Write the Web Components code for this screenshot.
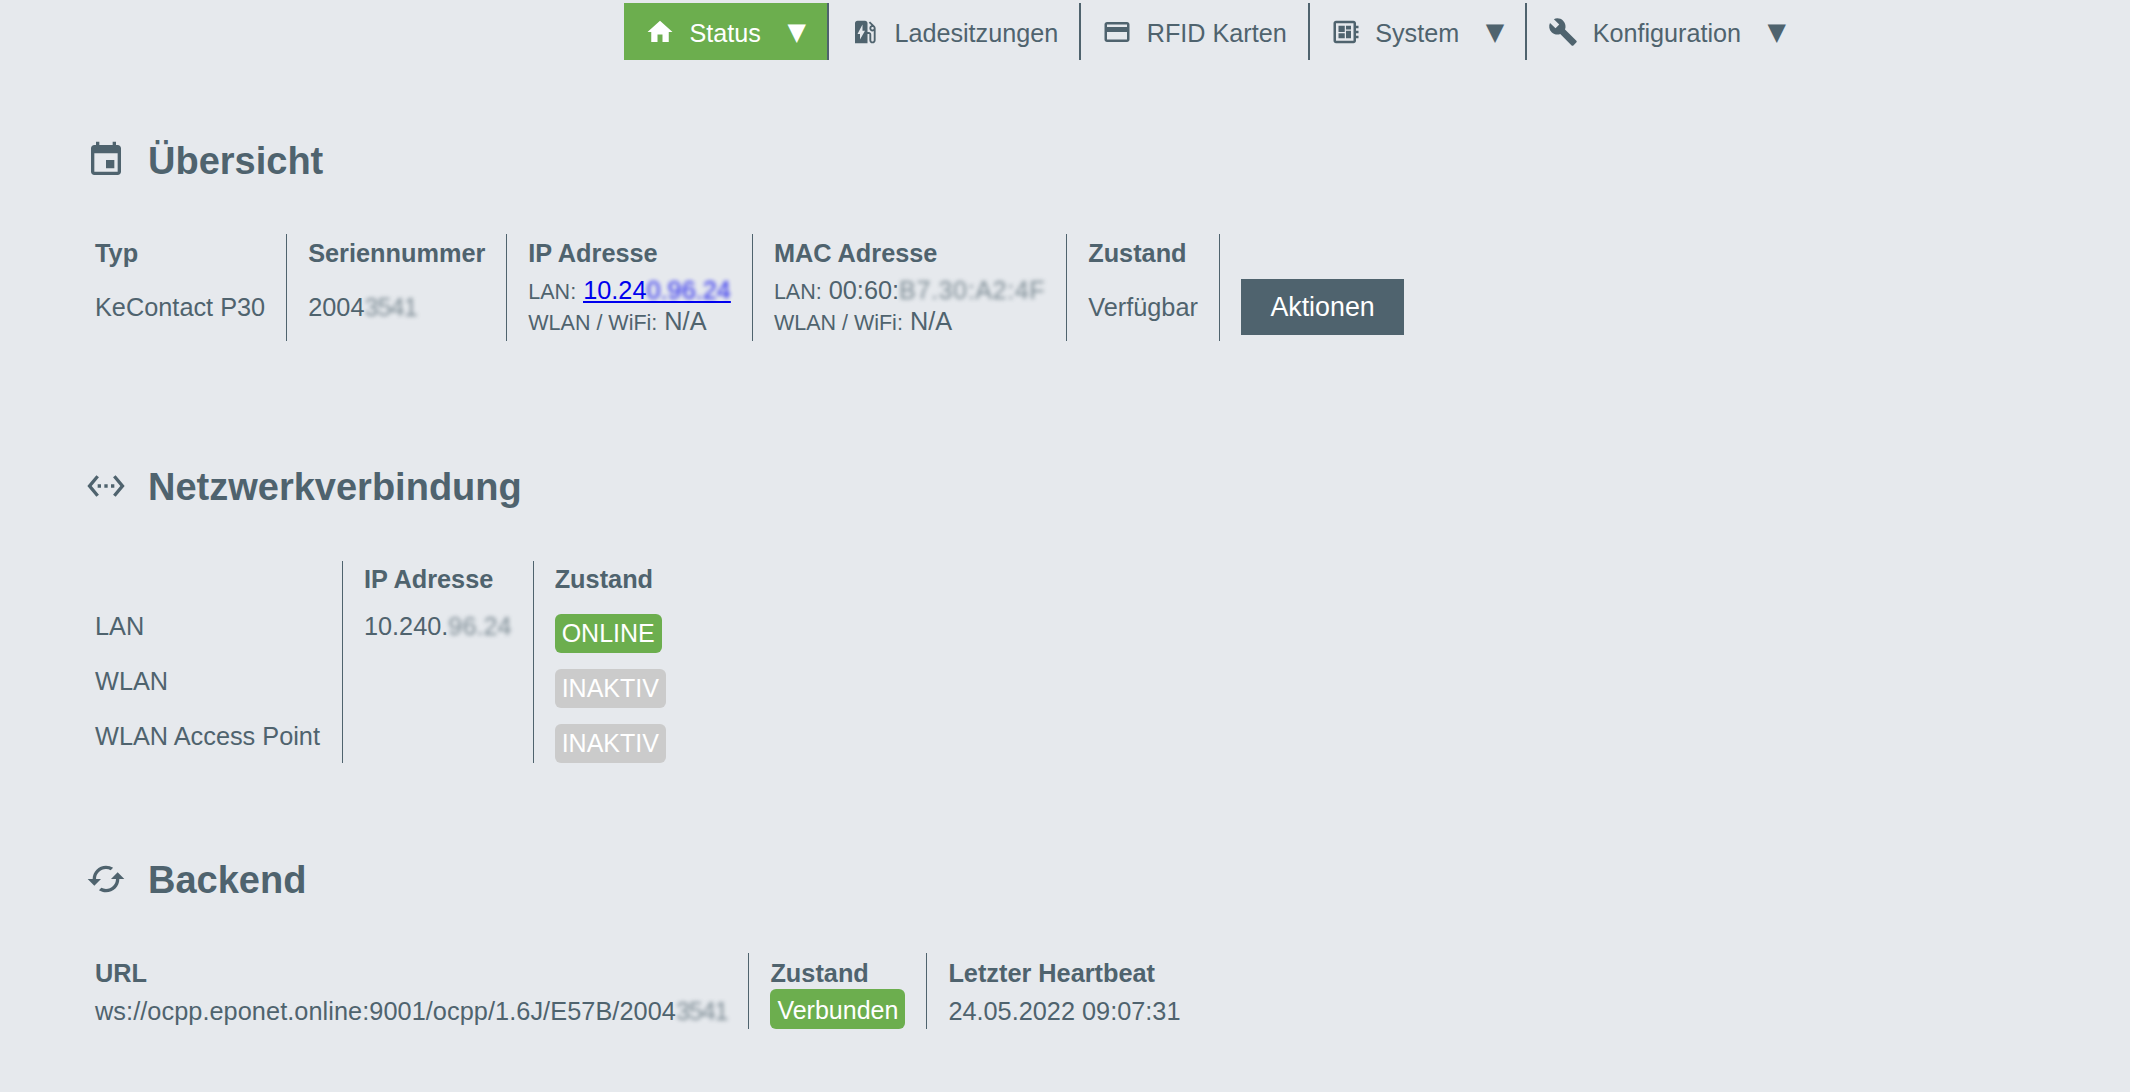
<!DOCTYPE html>
<html lang="de"><head><meta charset="utf-8"><title>Status</title>
<style>
html,body{margin:0;padding:0;background:#e6e9ed;color:#4f636e;font-family:"Liberation Sans",Arial,sans-serif;font-size:25.3px}
body{height:1092px;overflow:hidden}
</style></head><body>
<kc-nav>
  <kc-nav-item icon="home" caret active>Status</kc-nav-item>
  <kc-nav-item icon="ev">Ladesitzungen</kc-nav-item>
  <kc-nav-item icon="card">RFID Karten</kc-nav-item>
  <kc-nav-item icon="board" caret>System</kc-nav-item>
  <kc-nav-item icon="build" caret last>Konfiguration</kc-nav-item>
</kc-nav>

<kc-section icon="event" heading="Übersicht" style="--top:78px;--gap:52px">
  <kc-table style="--rows:38px 69px;--th-top:1px">
    <kc-col><kc-th>Typ</kc-th><kc-td>KeContact P30</kc-td></kc-col>
    <kc-col><kc-th>Seriennummer</kc-th><kc-td>2004<kc-blur style="letter-spacing:-1px">3541</kc-blur></kc-td></kc-col>
    <kc-col><kc-th>IP Adresse</kc-th><kc-td>
      <kc-line label="LAN:"><kc-link>10.24<kc-blur style="opacity:.85">0.96.24</kc-blur></kc-link></kc-line>
      <kc-line label="WLAN / WiFi:">N/A</kc-line></kc-td></kc-col>
    <kc-col><kc-th>MAC Adresse</kc-th><kc-td>
      <kc-line label="LAN:">00:60:<kc-blur style="letter-spacing:.5px">B7.30:A2:4F</kc-blur></kc-line>
      <kc-line label="WLAN / WiFi:">N/A</kc-line></kc-td></kc-col>
    <kc-col><kc-th>Zustand</kc-th><kc-td>Verfügbar</kc-td></kc-col>
    <kc-col plain><kc-th></kc-th><kc-td><kc-button>Aktionen</kc-button></kc-td></kc-col>
  </kc-table>
</kc-section>

<kc-section icon="ethernet" heading="Netzwerkverbindung" style="--top:123px;--gap:53px">
  <kc-table style="--rows:37px 55px 55px 55px;--th-top:0px">
    <kc-col style="padding-right:22px"><kc-th></kc-th><kc-td>LAN</kc-td><kc-td>WLAN</kc-td><kc-td>WLAN Access Point</kc-td></kc-col>
    <kc-col><kc-th>IP Adresse</kc-th><kc-td>10.240.<kc-blur>96.24</kc-blur></kc-td><kc-td></kc-td><kc-td></kc-td></kc-col>
    <kc-col plain><kc-th>Zustand</kc-th>
      <kc-td end><kc-badge on>ONLINE</kc-badge></kc-td>
      <kc-td end><kc-badge>INAKTIV</kc-badge></kc-td>
      <kc-td end><kc-badge>INAKTIV</kc-badge></kc-td></kc-col>
  </kc-table>
</kc-section>

<kc-section icon="cached" heading="Backend" style="--top:94px;--gap:52px">
  <kc-table style="--rows:36px 40px;--th-top:2px">
    <kc-col><kc-th>URL</kc-th><kc-td bottom><span style="letter-spacing:.06px">ws://ocpp.eponet.online:9001/ocpp/1.6J/E57B/2004</span><kc-blur style="letter-spacing:-1.2px">3541</kc-blur></kc-td></kc-col>
    <kc-col><kc-th>Zustand</kc-th><kc-td end><kc-badge on style="height:40px;line-height:42px">Verbunden</kc-badge></kc-td></kc-col>
    <kc-col plain><kc-th>Letzter Heartbeat</kc-th><kc-td bottom>24.05.2022 09:07:31</kc-td></kc-col>
  </kc-table>
</kc-section>

<script>
const ICONS={
 home:'M10 20v-6h4v6h5v-8h3L12 3 2 12h3v8z',
 ev:'M19.77 7.23l.01-.01-3.72-3.72L15 4.56l2.11 2.11c-.94.36-1.61 1.26-1.61 2.33 0 1.38 1.12 2.5 2.5 2.5.36 0 .69-.08 1-.21v7.21c0 .55-.45 1-1 1s-1-.45-1-1V14c0-1.1-.9-2-2-2h-1V5c0-1.1-.9-2-2-2H6c-1.1 0-2 .9-2 2v16h10v-7.5h1.5v5c0 1.38 1.12 2.5 2.5 2.5s2.5-1.12 2.5-2.5V9c0-.69-.28-1.32-.73-1.77zM18 10c-.55 0-1-.45-1-1s.45-1 1-1 1 .45 1 1-.45 1-1 1zM8 18v-4.5H6L10 6v5h2l-4 7z',
 card:'M20 4H4c-1.11 0-1.99.89-1.99 2L2 18c0 1.11.89 2 2 2h16c1.11 0 2-.89 2-2V6c0-1.11-.89-2-2-2zm0 14H4v-6h16v6zm0-10H4V6h16v2z',
 board:'M22 9V7h-2V5c0-1.1-.9-2-2-2H4c-1.1 0-2 .9-2 2v14c0 1.1.9 2 2 2h14c1.1 0 2-.9 2-2v-2h2v-2h-2v-2h2v-2h-2V9h2zm-4 10H4V5h14v14zM6 13h5v4H6zm6-6h4v3h-4zM6 7h5v5H6zm6 4h4v6h-4z',
 build:'M22.7 19l-9.1-9.1c.9-2.3.4-5-1.5-6.9-2-2-5-2.4-7.4-1.3L9 6 6 9 1.6 4.7C.4 7.1.9 10.1 2.9 12.1c1.9 1.9 4.6 2.4 6.9 1.5l9.1 9.1c.4.4 1 .4 1.4 0l2.3-2.3c.5-.4.5-1.1.1-1.4z',
 event:'M17 12h-5v5h5v-5zM16 1v2H8V1H6v2H5c-1.11 0-1.99.9-1.99 2L3 19c0 1.1.89 2 2 2h14c1.1 0 2-.9 2-2V5c0-1.1-.9-2-2-2h-1V1h-2zm3 18H5V8h14v11z',
 ethernet:'M7.77 6.76L6.23 5.48.82 12l5.41 6.52 1.54-1.28L3.42 12l4.35-5.24zM7 13h2v-2H7v2zm10-2h-2v2h2v-2zm-6 2h2v-2h-2v2zm6.77-7.52l-1.54 1.28L20.58 12l-4.35 5.24 1.54 1.28L23.18 12l-5.41-6.52z',
 cached:'M19 8l-4 4h3c0 3.31-2.69 6-6 6-1.01 0-1.97-.25-2.8-.7l-1.46 1.46C8.97 19.54 10.43 20 12 20c4.42 0 8-3.58 8-8h3l-4-4zM6 12c0-3.31 2.69-6 6-6 1.01 0 1.97.25 2.8.7l1.46-1.46C15.03 4.46 13.57 4 12 4c-4.42 0-8 3.58-8 8H1l4 4 4-4H6z'
};
const icon=(n,s)=>`<svg width="${s}" height="${s}" viewBox="0 0 24 24" fill="currentColor" style="display:block;flex:none"><path d="${ICONS[n]}"/></svg>`;
function def(name,css,html){
  customElements.define(name,class extends HTMLElement{
    constructor(){super();const r=this.attachShadow({mode:'open'});
      r.innerHTML=`<style>${css}</style>${html}`;}
  });
}
def('kc-nav',':host{display:flex;margin:3px 0 0 624px;height:57px}','<slot></slot>');
customElements.define('kc-nav-item',class extends HTMLElement{
  connectedCallback(){
    if(this.shadowRoot)return;
    const r=this.attachShadow({mode:'open'});
    const caret=this.hasAttribute('caret')?'<span class="c">▼</span>':'';
    r.innerHTML=`<style>
      :host{display:flex;align-items:center;gap:14.5px;padding:0 21px;font-size:25.2px;border-right:2px solid #4f636e;white-space:nowrap}
      :host([active]){background:#6cae4e;color:#fff}
      :host([last]){border-right:0}
      .t{display:block;padding-top:3px}
      .c{font-family:"DejaVu Sans",sans-serif;font-size:24px;line-height:1;margin-left:12px;display:block;padding-top:1px}
    </style>${icon(this.getAttribute('icon'),30)}<span class="t"><slot></slot></span>${caret}`;
  }
});
customElements.define('kc-section',class extends HTMLElement{
  connectedCallback(){
    if(this.shadowRoot)return;
    const r=this.attachShadow({mode:'open'});
    r.innerHTML=`<style>
      :host{display:block;padding-top:var(--top)}
      h2{margin:0 0 var(--gap) 86px;height:44px;display:flex;align-items:center;gap:22px;font-size:38px;line-height:44px;font-weight:700}
      span{display:block;padding-top:2px}
    </style><h2>${icon(this.getAttribute('icon'),40)}<span>${this.getAttribute('heading')}</span></h2><slot></slot>`;
  }
});
def('kc-table',':host{display:flex;margin-left:74px;width:max-content}','<slot></slot>');
def('kc-col',`:host{display:grid;grid-template-rows:var(--rows);padding:0 21px;border-right:1px solid #4f636e}
  :host([plain]){border-right:0}`,'<slot></slot>');
def('kc-th',':host{display:block;font-weight:700;font-size:25.3px;line-height:36px;padding-top:var(--th-top);white-space:nowrap}','<slot></slot>');
def('kc-td',`:host{display:flex;flex-direction:column;justify-content:center;font-size:25.3px;line-height:36px;white-space:nowrap}
  :host([end]){justify-content:flex-end;align-items:flex-start}
  :host([bottom]){justify-content:flex-end}
  .i{display:block}`,'<div class="i"><slot></slot></div>');
customElements.define('kc-line',class extends HTMLElement{
  connectedCallback(){
    if(this.shadowRoot)return;
    const r=this.attachShadow({mode:'open'});
    r.innerHTML=`<style>:host{display:block;line-height:29px;font-size:25.3px;white-space:nowrap}
      b{font-weight:400;font-size:21.5px}</style><b>${this.getAttribute('label')}</b> <slot></slot>`;
  }
});
def('kc-link',':host{display:inline-block;line-height:25px;color:#0000ee;background:linear-gradient(#0000ee,#0000ee) bottom/100% 2px no-repeat}','<slot></slot>');
def('kc-blur',':host{display:inline-block;filter:blur(2px);opacity:.7}','<slot></slot>');
def('kc-badge',`:host{display:inline-block;height:39px;line-height:39px;padding:0 7px;border-radius:6px;background:#cbcbcb;color:#fff;font-size:25px}
  :host([on]){background:#6cae4e}`,'<slot></slot>');
def('kc-button',':host{display:inline-block;height:56px;line-height:56px;padding:0 29.5px;background:#4f636e;color:#fff;font-size:26.8px}','<slot></slot>');
</script>
</body></html>
